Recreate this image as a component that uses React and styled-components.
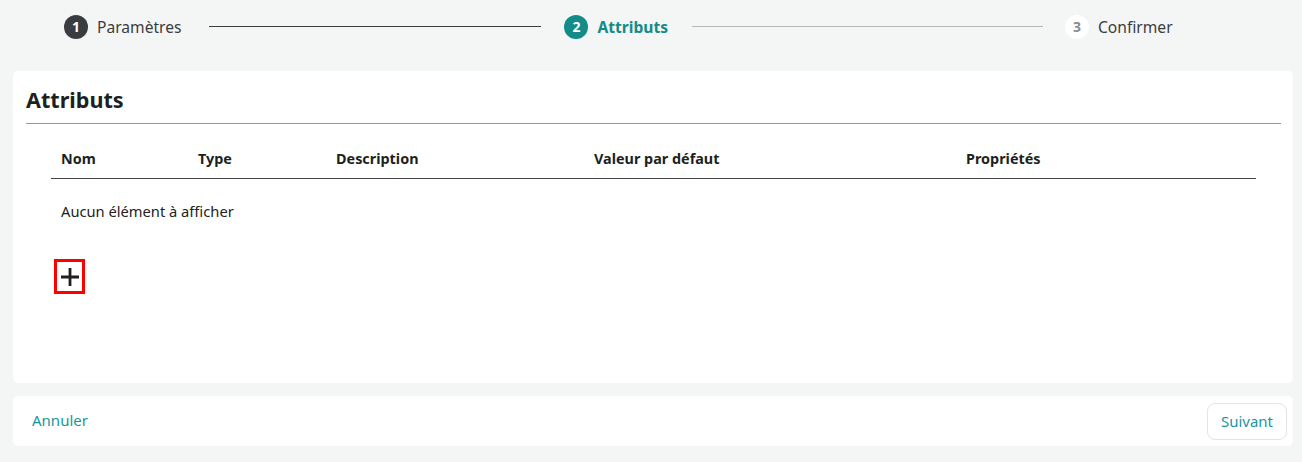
import React from 'react';
import styled, { createGlobalStyle } from 'styled-components';

const GlobalStyle = createGlobalStyle`
  html, body {
    margin: 0;
    padding: 0;
    background: #f4f5f5;
    font-family: 'Noto Sans', 'Open Sans', sans-serif;
    color: #222;
  }
`;

const Page = styled.div`
  width: 1302px;
  height: 462px;
  padding: 0 9px 0 13px;
  box-sizing: border-box;
  display: flex;
  flex-direction: column;
`;

const Stepper = styled.div`
  height: 53px;
  display: flex;
  align-items: center;
  padding: 0 0 0 51px;
`;

const Step = styled.div`
  display: flex;
  align-items: center;
  gap: 9px;
  font-size: 15.6px;
  color: ${p => (p.active ? '#138b89' : '#3a3d40')};
  font-weight: ${p => (p.active ? 700 : 400)};
`;

const Bullet = styled.span`
  width: 24px;
  height: 24px;
  border-radius: 50%;
  display: flex;
  align-items: center;
  justify-content: center;
  font-size: 14px;
  font-weight: 700;
  background: ${p => p.bg};
  color: ${p => p.fg};
`;

const Connector = styled.div`
  height: 1px;
  width: ${p => p.w}px;
  margin-left: ${p => p.before}px;
  margin-right: ${p => p.after}px;
  background: ${p => (p.done ? '#3a3d40' : '#b5b7b8')};
`;

const Card = styled.div`
  margin-top: 18px;
  background: #fff;
  border-radius: 5px;
  height: 312px;
  padding: 14px 12px 0 13px;
  box-sizing: border-box;
`;

const Title = styled.h2`
  margin: 0;
  font-size: 21.6px;
  font-weight: 700;
  color: #1d1f21;
  line-height: 30px;
  padding-bottom: 8px;
  border-bottom: 1px solid #9a9a9a;
`;

const Table = styled.div`
  margin: 20px 25px 0 25px;
`;

const Row = styled.div`
  display: grid;
  grid-template-columns: 137px 138px 258px 372px 1fr;
  align-items: center;
`;

const HeadRow = styled(Row)`
  height: 35px;
  padding-bottom: 6px;
  box-sizing: border-box;
  border-bottom: 1px solid #444;
`;

const HeadCell = styled.div`
  padding: 0 10px;
  font-size: 14.4px;
  font-weight: 700;
  color: #1d1f21;
`;

const Empty = styled.div`
  padding: 0 10px;
  height: 64px;
  display: flex;
  align-items: center;
  font-size: 14.7px;
  color: #222;
`;

const AddButton = styled.button`
  margin: 16px 0 0 3px;
  width: 31px;
  height: 35px;
  border: 3px solid #ff0000;
  background: #fff;
  padding: 0;
  display: flex;
  align-items: center;
  justify-content: center;
  cursor: pointer;
`;

const Footer = styled.div`
  margin-top: 13px;
  background: #fff;
  border-radius: 5px;
  height: 50px;
  display: flex;
  align-items: center;
  justify-content: space-between;
  padding: 0 6px 0 19px;
`;

const LinkButton = styled.button`
  border: none;
  background: none;
  padding: 0 0 2px;
  font-family: inherit;
  font-size: 15px;
  color: #1b95a0;
  cursor: pointer;
`;

const OutlineButton = styled.button`
  height: 37px;
  padding: 0 13px;
  border: 1px solid #e2e4e5;
  border-radius: 8px;
  background: #fff;
  font-family: inherit;
  font-size: 15px;
  color: #1b95a0;
  cursor: pointer;
`;

const columns = ['Nom', 'Type', 'Description', 'Valeur par défaut', 'Propriétés'];

export default function App() {
  return (
    <Page>
      <GlobalStyle />
      <Stepper>
        <Step>
          <Bullet bg="#3a3d40" fg="#fff">1</Bullet>
          Paramètres
        </Step>
        <Connector done w={332} before={28} after={23} />
        <Step active>
          <Bullet bg="#138b89" fg="#fff">2</Bullet>
          Attributs
        </Step>
        <Connector w={351} before={24} after={22} />
        <Step>
          <Bullet bg="#fff" fg="#8a8c8e">3</Bullet>
          Confirmer
        </Step>
      </Stepper>

      <Card>
        <Title>Attributs</Title>
        <Table>
          <HeadRow>
            {columns.map(c => (
              <HeadCell key={c}>{c}</HeadCell>
            ))}
          </HeadRow>
          <Empty>Aucun élément à afficher</Empty>
          <AddButton aria-label="Ajouter">
            <svg width="20" height="20" viewBox="0 0 20 20">
              <path d="M10 1v18M1 10h18" stroke="#1d1f21" strokeWidth="2.8" />
            </svg>
          </AddButton>
        </Table>
      </Card>

      <Footer>
        <LinkButton>Annuler</LinkButton>
        <OutlineButton>Suivant</OutlineButton>
      </Footer>
    </Page>
  );
}
